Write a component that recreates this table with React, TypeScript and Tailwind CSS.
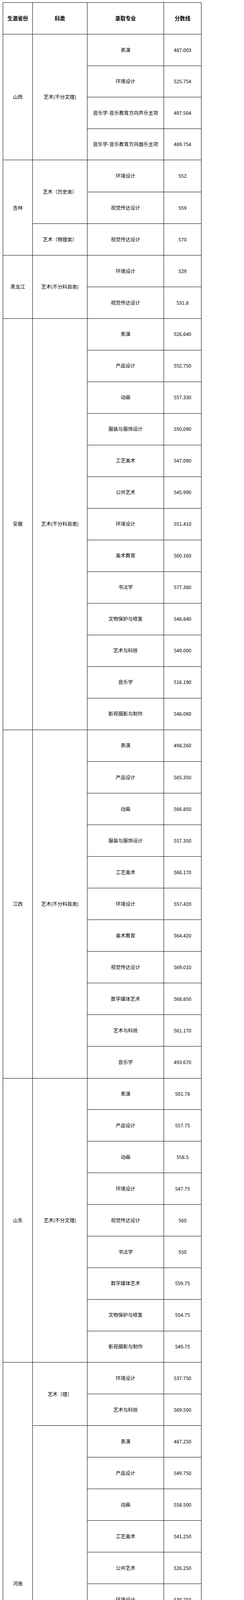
import React from 'react';

type Group = { c: string; rows: [string, string][] };
type Section = { p: string; h: string; groups: Group[] };

const data: Section[] = [
  {
    p: '山西',
    h: 'h-[80.58px]',
    groups: [
      {
        c: '艺术(不分文理)',
        rows: [
          ['表演', '487.003'],
          ['环境设计', '525.754'],
          ['音乐学-音乐教育方向声乐主项', '497.504'],
          ['音乐学-音乐教育方向器乐主项', '489.754'],
        ],
      },
    ],
  },
  {
    p: '吉林',
    h: 'h-[81.33px]',
    groups: [
      {
        c: '艺术（历史类）',
        rows: [
          ['环境设计', '552'],
          ['视觉传达设计', '559'],
        ],
      },
      { c: '艺术（物理类）', rows: [['视觉传达设计', '570']] },
    ],
  },
  {
    p: '黑龙江',
    h: 'h-[80.7px]',
    groups: [
      {
        c: '艺术(不分科目类)',
        rows: [
          ['环境设计', '529'],
          ['视觉传达设计', '531.8'],
        ],
      },
    ],
  },
  {
    p: '安徽',
    h: 'h-[81px]',
    groups: [
      {
        c: '艺术(不分科目类)',
        rows: [
          ['表演', '526.640'],
          ['产品设计', '552.750'],
          ['动画', '557.330'],
          ['服装与服饰设计', '550.090'],
          ['工艺美术', '547.090'],
          ['公共艺术', '545.990'],
          ['环境设计', '551.410'],
          ['美术教育', '560.160'],
          ['书法学', '577.380'],
          ['文物保护与修复', '548.840'],
          ['艺术与科技', '549.000'],
          ['音乐学', '516.190'],
          ['影视摄影与制作', '548.080'],
        ],
      },
    ],
  },
  {
    p: '江西',
    h: 'h-[81.09px]',
    groups: [
      {
        c: '艺术(不分科目类)',
        rows: [
          ['表演', '498.260'],
          ['产品设计', '565.350'],
          ['动画', '566.850'],
          ['服装与服饰设计', '557.350'],
          ['工艺美术', '566.170'],
          ['环境设计', '557.420'],
          ['美术教育', '564.420'],
          ['视觉传达设计', '569.010'],
          ['数字媒体艺术', '568.850'],
          ['艺术与科技', '561.170'],
          ['音乐学', '493.670'],
        ],
      },
    ],
  },
  {
    p: '山东',
    h: 'h-[80.89px]',
    groups: [
      {
        c: '艺术(不分文理)',
        rows: [
          ['表演', '501.78'],
          ['产品设计', '557.75'],
          ['动画', '558.5'],
          ['环境设计', '547.75'],
          ['视觉传达设计', '560'],
          ['书法学', '550'],
          ['数字媒体艺术', '559.75'],
          ['文物保护与修复', '554.75'],
          ['影视摄影与制作', '549.75'],
        ],
      },
    ],
  },
  {
    p: '河南',
    h: 'h-[80.97px]',
    groups: [
      {
        c: '艺术（理）',
        rows: [
          ['环境设计', '537.750'],
          ['艺术与科技', '569.500'],
        ],
      },
      {
        c: '艺术（文）',
        rows: [
          ['表演', '487.250'],
          ['产品设计', '549.750'],
          ['动画', '558.500'],
          ['工艺美术', '541.250'],
          ['公共艺术', '526.250'],
          ['环境设计', '530.750'],
          ['美术教育', '539.250'],
          ['视觉传达设计', '554.000'],
          ['书法学', '519.000'],
          ['戏剧影视美术设计', '544.250'],
          ['艺术与科技', '553.500'],
          ['影视摄影与制作', '534.500'],
        ],
      },
    ],
  },
  {
    p: '湖北',
    h: 'h-[81.85px]',
    groups: [
      {
        c: '艺术(不分文理)',
        rows: [
          ['环境设计', '651.2'],
          ['音乐学', '615.04'],
        ],
      },
    ],
  },
  {
    p: '广东',
    h: 'h-[80.82px]',
    groups: [
      {
        c: '艺术(不分科目类)',
        rows: [
          ['产品设计', '524'],
          ['动画', '515'],
          ['服装与服饰设计', '501'],
          ['工艺美术', '501'],
          ['公共艺术', '498'],
          ['环境设计', '498'],
          ['美术教育', '503'],
          ['视觉传达设计', '530'],
          ['书法学', '548'],
          ['艺术与科技', '513'],
          ['音乐学', '478'],
        ],
      },
    ],
  },
  {
    p: '四川',
    h: 'h-[80.06px]',
    groups: [
      { c: '艺术（理）', rows: [['环境设计', '588.693']] },
      {
        c: '艺术（文）',
        rows: [
          ['动画', '570.853'],
          ['工艺美术', '569.843'],
          ['公共艺术', '568.753'],
          ['环境设计', '568.353'],
        ],
      },
    ],
  },
  {
    p: '云南',
    h: 'h-[79.5px]',
    groups: [
      {
        c: '艺术(不分文理)',
        rows: [
          ['表演', '74.146'],
          ['视觉传达设计', '77.802'],
        ],
      },
    ],
  },
];

const cell = 'flex items-center justify-center border-r border-b border-black text-center';

export default function App() {
  return (
    <div className="bg-white h-[6253px] overflow-hidden pt-[6px] pl-[7px] font-['Noto_Sans_CJK_SC',sans-serif] text-black text-[12.5px] leading-none">
      <div className="w-[509px] border-l border-t border-black">
        <div className="flex h-[81px] font-bold text-[13.3px]">
          <div className={`${cell} w-[76px]`}>生源省份</div>
          <div className={`${cell} w-[140px]`}>科类</div>
          <div className={`${cell} w-[196px]`}>录取专业</div>
          <div className={`${cell} w-[96px]`}>分数线</div>
        </div>
        {data.map((sec) => (
          <div key={sec.p} className="flex">
            <div className={`${cell} w-[76px] shrink-0`}>{sec.p}</div>
            <div className="flex flex-col">
              {sec.groups.map((g, gi) => (
                <div key={gi} className="flex">
                  <div className={`${cell} w-[140px] shrink-0`}>{g.c}</div>
                  <div className="flex flex-col">
                    {g.rows.map((r, ri) => (
                      <div key={ri} className={`flex ${sec.h}`}>
                        <div className={`${cell} w-[196px] shrink-0`}>{r[0]}</div>
                        <div className={`${cell} w-[96px] shrink-0`}>{r[1]}</div>
                      </div>
                    ))}
                  </div>
                </div>
              ))}
            </div>
          </div>
        ))}
      </div>
    </div>
  );
}
